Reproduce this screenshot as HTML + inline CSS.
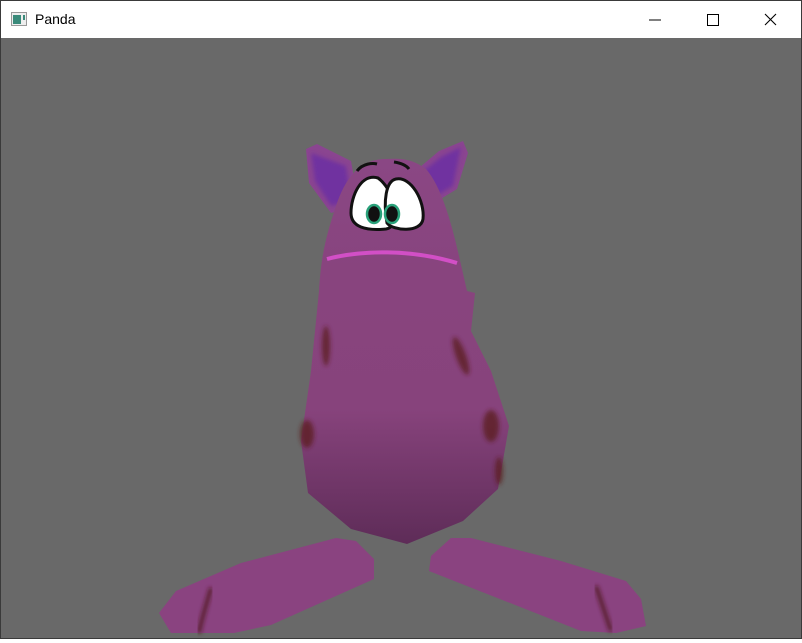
<!DOCTYPE html>
<html><head><style>
html,body{margin:0;padding:0;width:802px;height:639px;overflow:hidden;background:#fff;font-family:"Liberation Sans",sans-serif}
.win{position:absolute;left:0;top:0;width:800px;height:637px;border:1px solid #3a3a3a;}
.title{position:absolute;left:0;top:0;width:800px;height:37px;background:#fff}
.title span{position:absolute;left:34px;top:10px;font-size:14px;color:#000}
.view{position:absolute;left:0;top:37px;width:800px;height:600px;background:#696969}
</style></head><body>
<div class="win">
<div class="title">
<svg style="position:absolute;left:10px;top:11px" width="16" height="14"><rect x="0.5" y="0.5" width="15" height="13" fill="#eee" stroke="#999"/><rect x="2" y="3" width="8" height="9" fill="#3a8a7a"/><rect x="12" y="3" width="2" height="5" fill="#3a8a7a"/></svg>
<span>Panda</span>
<svg style="position:absolute;left:640px;top:8px" width="140" height="22">
<line x1="8" y1="11" x2="20" y2="11" stroke="#000"/>
<rect x="66.5" y="5.5" width="11" height="11" fill="none" stroke="#000"/>
<path d="M124 5 L135 16 M135 5 L124 16" stroke="#000" stroke-width="1.1"/>
</svg>
</div>
<div class="view">
<svg width="800" height="600" viewBox="0 37 800 600">
<defs>
<linearGradient id="bg" x1="0" y1="0" x2="0" y2="1">
<stop offset="0" stop-color="#8a4784"/><stop offset="0.3" stop-color="#88447e"/><stop offset="0.65" stop-color="#87437c"/><stop offset="1" stop-color="#5e2c58"/></linearGradient>
<filter id="bl"><feGaussianBlur stdDeviation="2"/></filter>
</defs>
<!-- ears -->
<polygon points="305,148 316,143 350,160 358,205 330,212 308,182" fill="#8a4590"/>
<polygon points="310,152 345,165 350,200 330,205 314,180" fill="#7030a0" filter="url(#bl)"/>
<polygon points="438,150 462,140 467,152 456,188 428,205 412,172" fill="#8a4590"/>
<polygon points="440,156 460,146 452,185 430,198 420,172" fill="#7030a0" filter="url(#bl)"/>
<!-- body -->
<path d="M385,158 C360,158 345,175 335,205 C325,235 320,255 318,290 L310,370 L300,440 L307,492 L350,528 L406,543 L462,520 L497,488 L508,425 L490,370 L470,330 L474,292 L466,290 L458,255 C450,220 440,185 425,168 C412,158 400,157 385,158 Z" fill="url(#bg)"/>
<!-- mouth -->
<path d="M326,258 C360,249 410,248 456,262" stroke="#d24fc6" stroke-width="4" fill="none"/>
<!-- spots -->
<g filter="url(#bl)" fill="#5a1c1c" opacity="0.75">
<ellipse cx="325" cy="345" rx="4" ry="20"/>
<ellipse cx="306" cy="433" rx="7" ry="14"/>
<ellipse cx="460" cy="355" rx="5" ry="20" transform="rotate(-20 460 355)"/>
<ellipse cx="490" cy="425" rx="8" ry="16"/>
<ellipse cx="498" cy="470" rx="4" ry="14"/>
</g>
<!-- eyes -->
<path d="M377,177 C360,172 350,195 350,212 C350,226 365,230 385,228 C400,226 395,190 377,177Z" fill="#fff" stroke="#111" stroke-width="3"/>
<path d="M395,178 C385,180 382,200 386,222 C392,230 420,232 422,218 C424,200 410,175 395,178Z" fill="#fff" stroke="#111" stroke-width="3"/>
<ellipse cx="373" cy="213" rx="7" ry="9" fill="#111" stroke="#2aa17a" stroke-width="2.5"/>
<ellipse cx="391" cy="213" rx="7" ry="9" fill="#111" stroke="#2aa17a" stroke-width="2.5"/>
<path d="M356,170 C362,162 372,162 376,163" stroke="#111" stroke-width="3" fill="none"/>
<path d="M393,161 C400,162 405,164 408,168" stroke="#111" stroke-width="3" fill="none"/>
<!-- feet -->
<polygon points="158,612 175,590 240,562 335,537 355,540 373,558 373,578 270,624 233,632 170,632" fill="#8a4380"/>
<path d="M210,587 C205,605 200,620 198,632" stroke="#4a1515" stroke-width="4" fill="none" opacity="0.8" filter="url(#bl)"/>
<polygon points="428,570 430,555 450,537 470,537 560,560 625,580 640,598 645,625 615,632 580,630" fill="#8a4380"/>
<path d="M595,585 C600,600 605,615 610,630" stroke="#4a1515" stroke-width="4" fill="none" opacity="0.8" filter="url(#bl)"/>
</svg>
</div>
</div>
</body></html>
